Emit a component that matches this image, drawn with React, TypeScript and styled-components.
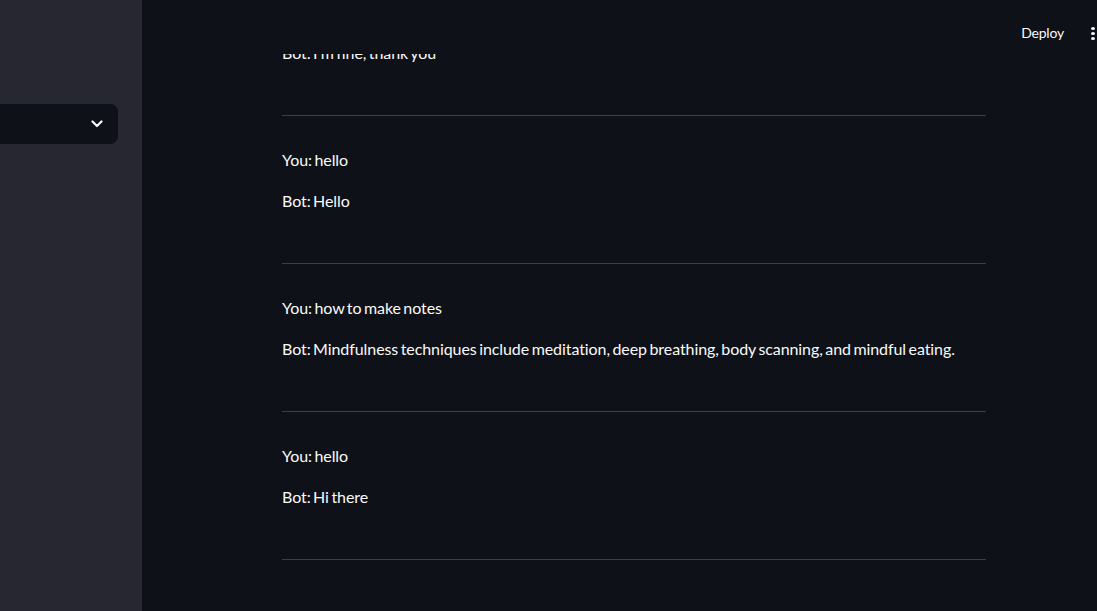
import React from "react";
import styled, { createGlobalStyle } from "styled-components";

const Global = createGlobalStyle`
  html, body { margin: 0; padding: 0; background: #0e1117; }
  body { font-family: Lato, "Noto Sans", sans-serif; color: #fafafa; }
  * { box-sizing: border-box; }
`;

const Shell = styled.div`
  display: flex;
  width: 100vw;
  height: 100vh;
  overflow: hidden;
  background: #0e1117;
`;

const Sidebar = styled.aside`
  flex: 0 0 142px;
  width: 142px;
  height: 100%;
  background: #262730;
  overflow: hidden;
  display: flex;
  flex-direction: column;
  align-items: flex-end;
  padding: 104px 24px 0 0;
`;

const Select = styled.div`
  flex: 0 0 auto;
  width: 220px;
  height: 40px;
  border-radius: 8px;
  background: #0e1117;
  display: flex;
  align-items: center;
  justify-content: flex-end;
  padding-right: 15px;
`;

const Main = styled.main`
  position: relative;
  flex: 1;
  height: 100%;
  overflow: hidden;
`;

const Header = styled.header`
  position: absolute;
  top: 0;
  left: 0;
  right: 0;
  height: 54px;
  background: #0e1117;
  display: flex;
  justify-content: flex-end;
  align-items: flex-start;
  padding: 21px 2px 0 0;
  z-index: 2;
`;

const DeployButton = styled.button`
  height: 24px;
  padding: 0 14px;
  border: none;
  background: transparent;
  color: #fafafa;
  font-family: Lato, "Noto Sans", sans-serif;
  font-size: 14px;
  letter-spacing: -0.2px;
  line-height: 24px;
  cursor: pointer;
`;

const Kebab = styled.div`
  height: 24px;
  width: 4px;
  margin-left: 13px;
  display: flex;
  flex-direction: column;
  justify-content: center;
  gap: 2px;
  span {
    display: block;
    width: 4px;
    height: 3px;
    border-radius: 50%;
    background: #fafafa;
  }
`;

const Column = styled.div`
  width: 704px;
  margin-left: 140px;
  padding-top: 40px;
  display: flex;
  flex-direction: column;
`;

const Entry = styled.div`
  display: flex;
  flex-direction: column;
  gap: 15.8px;
`;

const Line = styled.p`
  margin: 0;
  font-size: 16px;
  line-height: 25.6px;
  letter-spacing: -0.08px;
  word-spacing: -1.5px;
  color: #fafafa;
  white-space: nowrap;
`;

const Divider = styled.hr`
  margin: 49px 0 31px;
  border: none;
  height: 1px;
  background: #3c3f45;
`;

const chats: { you?: string; bot: string }[] = [
  { bot: "Bot: I'm fine, thank you" },
  { you: "You: hello", bot: "Bot: Hello" },
  { you: "You: how to make notes", bot: "Bot: Mindfulness techniques include meditation, deep breathing, body scanning, and mindful eating." },
  { you: "You: hello", bot: "Bot: Hi there" },
];

export default function App() {
  return (
    <>
      <Global />
      <Shell>
        <Sidebar>
          <Select>
            <svg width="12" height="8" viewBox="0 0 12 8" fill="none">
              <polyline points="1.5,1.5 6,6 10.5,1.5" stroke="#fafafa" strokeWidth="2.2" strokeLinecap="round" strokeLinejoin="round" />
            </svg>
          </Select>
        </Sidebar>
        <Main>
          <Header>
            <DeployButton>Deploy</DeployButton>
            <Kebab>
              <span />
              <span />
              <span />
            </Kebab>
          </Header>
          <Column>
            {chats.map((c, i) => (
              <React.Fragment key={i}>
                <Entry>
                  {c.you && <Line>{c.you}</Line>}
                  <Line>{c.bot}</Line>
                </Entry>
                <Divider />
              </React.Fragment>
            ))}
          </Column>
        </Main>
      </Shell>
    </>
  );
}
